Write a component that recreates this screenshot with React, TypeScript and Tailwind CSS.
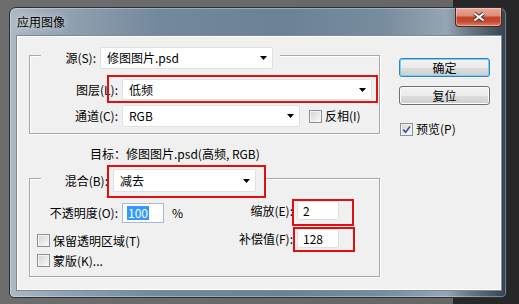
import type { ReactNode } from "react";

const Arrow = () => (
  <svg width="7" height="4" viewBox="0 0 7 4" className="shrink-0">
    <path d="M0 0h7L3.5 4z" fill="#000" />
  </svg>
);

const Select = ({ className, children }: { className: string; children: ReactNode }) => (
  <div
    className={`flex shrink-0 items-center justify-between rounded-[2px] border border-[#e0e0e0] bg-white pl-[6px] pr-[5px] ${className}`}
  >
    <span>{children}</span>
    <Arrow />
  </div>
);

const Check = ({ checked }: { checked?: boolean }) => (
  <span className="flex h-[13px] w-[13px] shrink-0 items-center justify-center border border-[#8e8f8f] bg-[linear-gradient(135deg,#d2d2d2,#fbfbfb)] shadow-[inset_0_0_0_1px_#f3f3f3]">
    {checked && (
      <svg width="9" height="9" viewBox="0 0 9 9">
        <path d="M1.2 4.6 3.6 7.2 8 1.4" fill="none" stroke="#40589a" strokeWidth="1.7" />
      </svg>
    )}
  </span>
);

const Button = ({ children, primary }: { children: ReactNode; primary?: boolean }) => (
  <div
    className={`flex h-[19px] w-[91px] items-center justify-center rounded-[3px] border bg-[linear-gradient(to_bottom,#f2f2f2_0%,#ebebeb_50%,#dddddd_51%,#cfcfcf_100%)] ${
      primary ? "border-[#3c7fb1] shadow-[inset_0_0_0_1px_#6fd3fb]" : "border-[#707070] shadow-[inset_0_0_0_1px_#fcfcfc]"
    }`}
  >
    {children}
  </div>
);

export default function App() {
  return (
    <div className="flex h-[304px] w-[519px] overflow-hidden bg-[linear-gradient(to_right,#6d6d6d_0,#666666_453px,#272727_453px)] font-['Noto_Sans_CJK_SC',sans-serif] text-[12px] leading-[16px] text-black">
      {/* window */}
      <div className="ml-[9px] mt-[7px] flex h-[291px] w-[498px] flex-col rounded-t-[7px] rounded-b-[5px] border border-[#26323f] bg-[linear-gradient(to_right,#aeb9c3_0%,#93a3b2_10%,#73889c_30%,#6b8196_55%,#788c9f_75%,#96a5b2_88%,#6e7d8a_92%,#34424f_100%)] pb-[6px] pl-[6px] pr-[4px] shadow-[inset_0_0_0_1px_rgba(255,255,255,0.3)]">
        {/* title bar */}
        <div className="flex h-[27px] shrink-0 justify-between">
          <span className="ml-[1px] self-center [text-shadow:0_0_6px_rgba(255,255,255,0.9)]">应用图像</span>
          <div className="flex h-[19px] w-[47px] items-center justify-center rounded-b-[4px] border border-t-0 border-[#5a2116] bg-[linear-gradient(to_bottom,#e9a897_0%,#dc8d79_42%,#c3432b_52%,#c44a30_75%,#df8368_100%)] shadow-[inset_0_0_0_1px_rgba(255,255,255,0.35)]">
            <svg width="14" height="10" viewBox="0 0 14 10">
              <path d="M2.5 1.5 11.5 8.5M11.5 1.5 2.5 8.5" stroke="#4b2b25" strokeWidth="4" />
              <path d="M2.5 1.5 11.5 8.5M11.5 1.5 2.5 8.5" stroke="#fff" strokeWidth="2.2" />
            </svg>
          </div>
        </div>

        {/* client area */}
        <div className="relative flex h-[256px] w-[486px] shrink-0 border border-[#7c8a98] bg-[#f0f0f0] shadow-[inset_0_0_0_1px_#ffffff]">
          {/* left column */}
          <div className="ml-[12px] flex w-[351px] flex-col">
            {/* source group */}
            <div className="mt-[19px] h-[79px] border border-[#a8a8a8] shadow-[inset_1px_1px_0_#fff,1px_1px_0_#fff]">
              <div className="-mt-[9px] ml-[11px] flex w-fit items-center bg-[#f0f0f0] pr-[7px]">
                <span className="w-[55px] text-right">源(S):</span>
                <Select className="ml-[4px] h-[22px] w-[173px]">修图图片.psd</Select>
              </div>
              <div className="mt-[10px] flex items-center">
                <span className="w-[88px] text-right">图层(L):</span>
                <Select className="ml-[4px] h-[21px] w-[250px]">低频</Select>
              </div>
              <div className="mt-[5px] flex items-center">
                <span className="w-[88px] text-right">通道(C):</span>
                <Select className="ml-[4px] h-[22px] w-[178px]">RGB</Select>
                <span className="ml-[9px]">
                  <Check />
                </span>
                <span className="ml-[3px]">反相(I)</span>
              </div>
            </div>

            {/* target */}
            <div className="ml-[61px] mt-[12px]">目标：修图图片.psd(高频, RGB)</div>

            {/* blend group */}
            <div className="mt-[16px] h-[99px] border border-[#a8a8a8] shadow-[inset_1px_1px_0_#fff,1px_1px_0_#fff]">
              <div className="-mt-[10px] ml-[11px] flex w-fit items-center bg-[#f0f0f0] pr-[10px]">
                <span className="w-[67px] text-right">混合(B):</span>
                <Select className="ml-[5px] h-[23px] w-[143px]">减去</Select>
              </div>
              <div className="flex">
                <div className="flex w-[200px] flex-col">
                  <div className="mt-[11px] flex items-center">
                    <span className="w-[88px] text-right">不透明度(O):</span>
                    <div className="ml-[4px] flex h-[20px] w-[42px] items-center border border-[#a5bbd2] bg-white pl-[4px]">
                      <span className="bg-[#3399ff] px-[1px] leading-[14px] text-white">100</span>
                    </div>
                    <span className="ml-[8px]">%</span>
                  </div>
                  <div className="mt-[11px] flex h-[13px] items-center">
                    <span className="ml-[7px]">
                      <Check />
                    </span>
                    <span className="ml-[3px]">保留透明区域(T)</span>
                  </div>
                  <div className="mt-[7px] flex h-[13px] items-center">
                    <span className="ml-[7px]">
                      <Check />
                    </span>
                    <span className="ml-[3px]">蒙版(K)...</span>
                  </div>
                </div>
                <div className="flex flex-col">
                  <div className="mt-[9px] flex items-center">
                    <span className="w-[63px] text-right">缩放(E):</span>
                    <div className="ml-[4px] flex h-[19px] w-[42px] items-center rounded-[2px] border border-[#e0e0e0] bg-white pl-[5px]">
                      2
                    </div>
                  </div>
                  <div className="mt-[9px] flex items-center">
                    <span className="w-[63px] text-right">补偿值(F):</span>
                    <div className="ml-[4px] flex h-[19px] w-[42px] items-center rounded-[2px] border border-[#e0e0e0] bg-white pl-[5px]">
                      128
                    </div>
                  </div>
                </div>
              </div>
            </div>
          </div>

          {/* right column */}
          <div className="ml-[19px] mt-[22px] flex flex-col">
            <Button primary>确定</Button>
            <div className="mt-[9px]">
              <Button>复位</Button>
            </div>
            <div className="ml-[1px] mt-[16px] flex items-center">
              <Check checked />
              <span className="ml-[3px]">预览(P)</span>
            </div>
          </div>

          {/* red annotation boxes */}
          <div className="absolute left-[90px] top-[39px] h-[28px] w-[271px] border-2 border-[#e01010]" />
          <div className="absolute left-[90px] top-[129px] h-[33px] w-[159px] border-2 border-[#e01010]" />
          <div className="absolute left-[275px] top-[163px] h-[27px] w-[62px] border-2 border-[#e01010]" />
          <div className="absolute left-[276px] top-[191px] h-[25px] w-[62px] border-2 border-[#e01010]" />
        </div>
      </div>
    </div>
  );
}
